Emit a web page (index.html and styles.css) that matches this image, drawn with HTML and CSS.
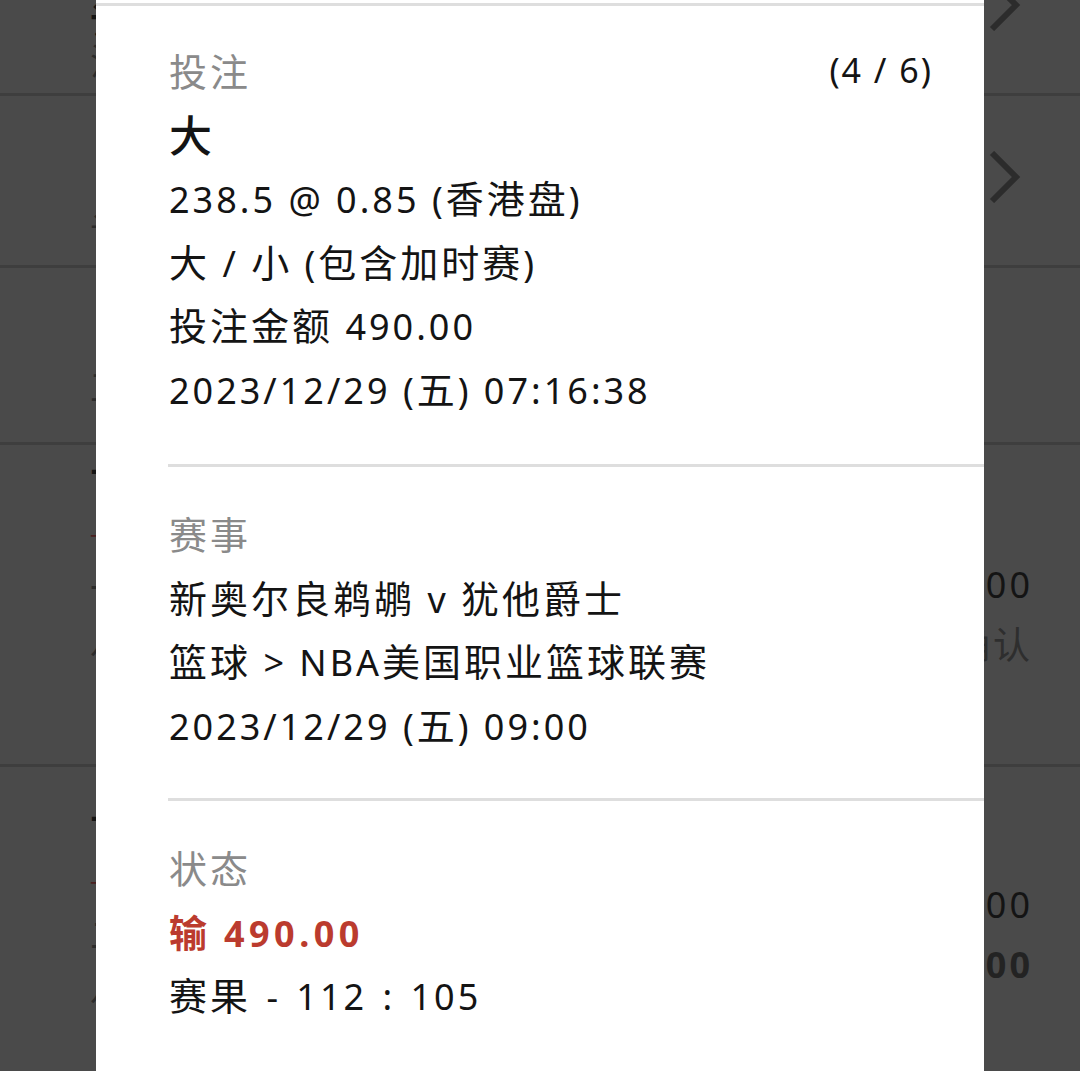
FILE: index.html
```html
<!DOCTYPE html>
<html lang="zh-CN">
<head>
<meta charset="utf-8">
<title>投注详情</title>
<link rel="stylesheet" href="styles.css">
</head>
<body>
<div class="page">
  <div class="row r1">
    <div class="left">
      <div class="bt">订单</div>
      <div class="bs">注单</div>
    </div>
    <svg class="chev chev-top" viewBox="0 0 34 52" width="34" height="52"><polyline points="5,2 29,26 5,50"/></svg>
  </div>
  <div class="row r2">
    <div class="left">
      <div class="bs">订单</div>
    </div>
    <svg class="chev" viewBox="0 0 34 52" width="34" height="52"><polyline points="5,2 29,26 5,50"/></svg>
  </div>
  <div class="row r3">
    <div class="left l3">
      <div class="bs">工</div>
    </div>
  </div>
  <div class="row r4">
    <div class="left l4">
      <div class="bt">下注</div>
      <div class="bred">一</div>
      <div class="bs">一</div>
      <div class="bs">八</div>
    </div>
    <div class="right">
      <div class="amt">490.00</div>
      <div class="note">待确认</div>
    </div>
  </div>
  <div class="row r5">
    <div class="left l5">
      <div class="bt">下注</div>
      <div class="bred">一</div>
      <div class="bs">二</div>
      <div class="bs">八</div>
    </div>
    <div class="right r5r">
      <div class="amt">490.00</div>
      <div class="amt bold">-490.00</div>
    </div>
  </div>
</div>

<div class="modal">
  <section class="sec first">
    <div class="head">
      <span class="label c">投注</span>
      <span class="count">(4 / 6)</span>
    </div>
    <div class="line big">大</div>
    <div class="line">238.5 @ 0.85 (<span class="c">香港盘</span>)</div>
    <div class="line"><span class="c">大</span> / <span class="c">小</span> (<span class="c">包含加时赛</span>)</div>
    <div class="line"><span class="c">投注金额</span> 490.00</div>
    <div class="line">2023/12/29 (<span class="c">五</span>) 07:16:38</div>
  </section>
  <section class="sec">
    <div class="head"><span class="label c">赛事</span></div>
    <div class="line"><span class="c">新奥尔良鹈鹕</span> v <span class="c">犹他爵士</span></div>
    <div class="line"><span class="c">篮球</span> &gt; NBA<span class="c">美国职业篮球联赛</span></div>
    <div class="line">2023/12/29 (<span class="c">五</span>) 09:00</div>
  </section>
  <section class="sec">
    <div class="head"><span class="label c">状态</span></div>
    <div class="line lose"><span class="c">输</span> 490.00</div>
    <div class="line score"><span class="c">赛果</span> - 112 : 105</div>
  </section>
</div>
</body>
</html>
```
FILE: styles.css
```css
* { box-sizing: border-box; }
html, body {
  margin: 0;
  padding: 0;
  width: 1080px;
  height: 1071px;
  overflow: hidden;
  background: #4a4a4a;
  font-family: "Noto Sans", "Noto Sans CJK SC", sans-serif;
}
.page {
  position: relative;
  width: 1080px;
}
.row {
  display: flex;
  justify-content: space-between;
  align-items: flex-start;
  border-bottom: 3px solid #3e3e3e;
  box-sizing: content-box;
  overflow: hidden;
}
.r1 { height: 93px; }
.r2 { height: 169px; }
.r3 { height: 174px; }
.r4 { height: 319px; }
.r5 { height: 310px; }

.left {
  padding-left: 90px;
  font-size: 36px;
  line-height: 40px;
  letter-spacing: 3px;
}
.bt { color: #151515; font-weight: 700; }
.bs { color: #2c2c2c; }
.bred { color: #4a2020; font-size: 20px; }
.r1 .left { padding-top: 2px; }
.r2 .left { padding-top: 116px; }
.l3 { padding-top: 100px; }
.l4 { padding-top: 20px; display: flex; flex-direction: column; gap: 12px; }
.l5 { padding-top: 45px; display: flex; flex-direction: column; gap: 12px; }

.chev {
  margin-right: 59px;
  fill: none;
  stroke: #2c2c2c;
  stroke-width: 6;
  stroke-linecap: butt;
  stroke-linejoin: miter;
}
.chev-top { margin-top: -21px; }
.r2 .chev { margin-top: 55px; }

.right {
  padding-right: 47px;
  padding-top: 110px;
  text-align: right;
  font-size: 36px;
  line-height: 60px;
  letter-spacing: 3px;
}
.amt { color: #141414; }
.amt.bold { font-weight: 700; color: #232323; }
.note { color: #2e2e2e; font-size: 37px; }
.r5r { padding-top: 108px; }

/* modal */
.modal {
  position: absolute;
  left: 96px;
  top: 0;
  width: 888px;
  height: 1071px;
  background: #ffffff;
  padding-top: 3px;
  color: #141414;
  overflow: hidden;
}
.modal::before {
  content: "";
  display: block;
  height: 3px;
  background: #dedede;
}
.sec {
  margin-left: 72px;
  padding: 37px 51px 40px 1px;
  border-bottom: 3px solid #dedede;
  font-size: 36px;
  letter-spacing: 3px;
}
.sec.first { padding-top: 35px; padding-bottom: 42px; }
.sec:last-child { border-bottom: none; }
.c {
  font-family: "Noto Sans CJK SC", sans-serif;
  font-size: 38px;
  letter-spacing: 3px;
}
.head {
  display: flex;
  justify-content: space-between;
  align-items: flex-start;
  height: 63.5px;
  line-height: 58px;
}
.label { color: #8a8a8a; }
.count { font-size: 34px; letter-spacing: 2px; color: #141414; }
.line {
  height: 63.5px;
  line-height: 57.5px;
  white-space: nowrap;
}
.big { font-family: "Noto Sans CJK SC", sans-serif; font-size: 43px; font-weight: 500; letter-spacing: 0; }
.lose { color: #bb3b2e; font-weight: 700; letter-spacing: 4.5px; }
.score { word-spacing: 3px; }
```
